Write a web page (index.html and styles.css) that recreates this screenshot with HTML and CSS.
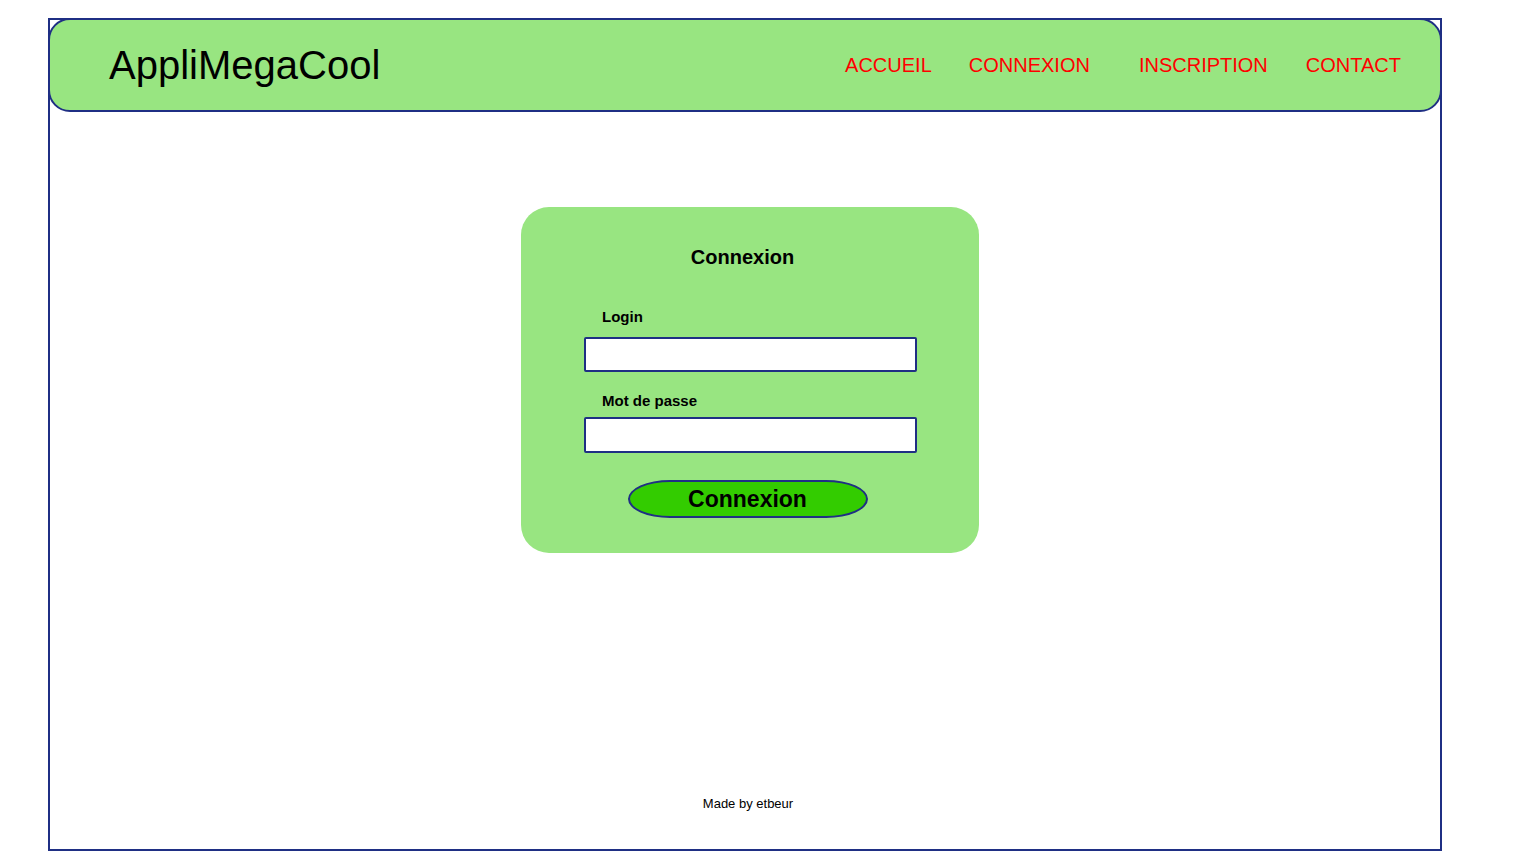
FILE: index.html
```html
<!DOCTYPE html>
<html lang="fr">
<head>
<meta charset="utf-8">
<title>AppliMegaCool - Connexion</title>
<link rel="stylesheet" href="styles.css">
</head>
<body>
<div class="page">
  <header class="header">
    <div class="brand">AppliMegaCool</div>
    <nav class="nav">
      <a class="nav-link nav-link--first" href="#">ACCUEIL</a>
      <a class="nav-link nav-link--wide" href="#">CONNEXION</a>
      <a class="nav-link" href="#">INSCRIPTION</a>
      <a class="nav-link" href="#">CONTACT</a>
    </nav>
  </header>
  <main class="main">
    <form class="card">
      <h2 class="card-title">Connexion</h2>
      <label class="label label--first" for="login">Login</label>
      <input class="field" id="login" type="text">
      <label class="label label--second" for="pwd">Mot de passe</label>
      <input class="field field--tall" id="pwd" type="password">
      <button class="btn" type="button">Connexion</button>
    </form>
  </main>
  <footer class="footer">Made by etbeur</footer>
</div>
</body>
</html>
```
FILE: styles.css
```css
html, body {
  margin: 0;
  padding: 0;
  background: #ffffff;
}
body {
  font-family: "Liberation Sans", Arial, sans-serif;
  color: #000;
  padding: 18px 0 0 48px;
}
.page {
  width: 1390px;
  height: 829px;
  border: 2px solid #1f2f84;
  display: flex;
  flex-direction: column;
}
.header {
  margin: -2px -2px 0 -2px;
  height: 90px;
  border: 2px solid #1f2f84;
  border-radius: 22px;
  background: #98e581;
  display: flex;
  align-items: center;
  justify-content: space-between;
  padding: 0 39px 0 59px;
}
.brand {
  font-size: 40px;
  line-height: 46px;
}
.nav {
  display: flex;
  align-items: center;
  gap: 38px;
}
.nav-link {
  color: #ff0000;
  text-decoration: none;
  font-size: 20px;
  line-height: 23px;
}
.nav-link--first {
  margin-right: -1px;
}
.nav-link--wide {
  margin-right: 11px;
}
.main {
  flex: 1;
  display: flex;
  justify-content: center;
  align-items: flex-start;
  padding-top: 95px;
}
.card {
  width: 458px;
  box-sizing: border-box;
  margin-left: 10px;
  background: #98e581;
  border-radius: 28px;
  padding: 39px 62px 35px 63px;
  display: flex;
  flex-direction: column;
}
.card-title {
  margin: 0 0 39px 0;
  font-size: 20px;
  line-height: 23px;
  text-align: center;
  padding-right: 16px;
}
.label {
  font-size: 15px;
  line-height: 17px;
  font-weight: bold;
  padding-left: 18px;
}
.label--first {
  margin-bottom: 12px;
}
.label--second {
  margin-top: 20px;
  margin-bottom: 8px;
}
.field {
  box-sizing: border-box;
  width: 333px;
  height: 35px;
  border: 2px solid #1f2f84;
  border-radius: 2px;
  background: #fff;
  margin: 0;
}
.field--tall {
  height: 36px;
}
.btn {
  align-self: center;
  margin: 27px 0 0 -6px;
  width: 240px;
  height: 38px;
  box-sizing: border-box;
  border: 2px solid #1f2f84;
  border-radius: 42px / 19px;
  background: #33cc00;
  font-family: "Liberation Sans", Arial, sans-serif;
  font-weight: bold;
  font-size: 23px;
  line-height: 26px;
  color: #000;
  padding: 0;
}
.footer {
  text-align: center;
  font-size: 13px;
  line-height: 15px;
  padding: 0 0 38px 6px;
}
```
